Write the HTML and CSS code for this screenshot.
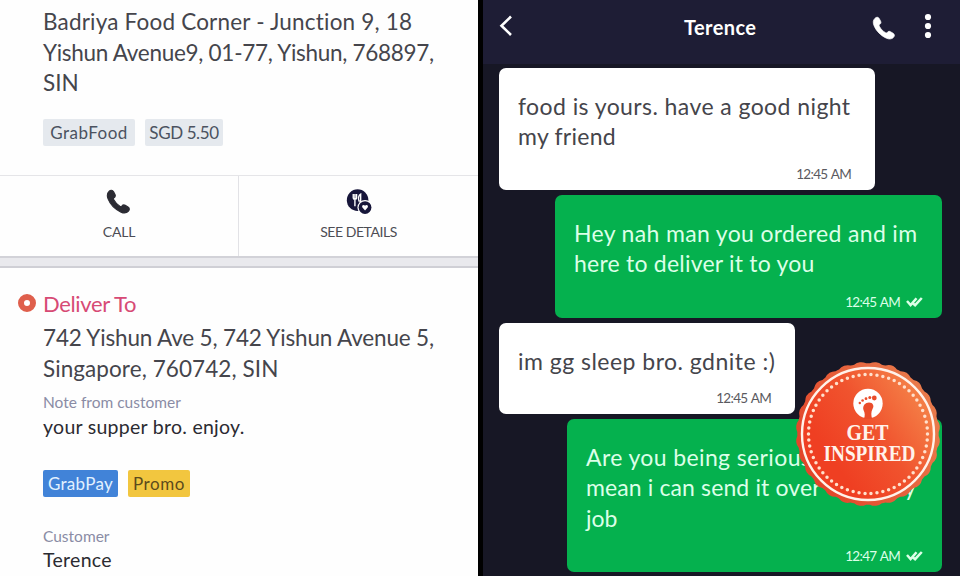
FILE: index.html
```html
<!DOCTYPE html>
<html lang="en">
<head>
<meta charset="utf-8">
<title>Delivery chat</title>
<link rel="stylesheet" href="styles.css">
</head>
<body>
<main class="screen">
  <section class="order">
    <div class="pickup">
      <p class="address"><span class="a1">Badriya Food Corner - Junction 9, 18</span><br><span class="a2">Yishun Avenue9, 01-77, Yishun, 768897,</span><br><span class="a3">SIN</span></p>
      <div class="tags"><span class="tag tag-food">GrabFood</span><span class="tag tag-price">SGD 5.50</span></div>
    </div>
    <div class="actions">
      <div class="action">
        <svg width="28" height="28" viewBox="0 0 28 28"><path d="M3.200 2.700C5 .8 7 1 8.200 3l1.500 3c.7 1.500.2 2.700-1.300 3.600-.6.5-.6 1-.2 1.800 1.700 3.300 3.800 5.500 7 7.300.8.5 1.300.4 1.800-.2 1.100-1.400 2.300-1.700 3.700-.9l3 1.800c1.800 1.200 1.900 3 .2 4.700-1.900 1.900-4.600 2.100-7.700.8C9.800 22 4.600 16.700 2.200 10.600.9 7.300 1.200 4.700 3.200 2.700Z" fill="#2b2b33" stroke="#2b2b33" stroke-width="1.200"/></svg>
        <span class="l1">CALL</span>
      </div>
      <div class="action">
        <svg width="28" height="28" viewBox="0 0 28 28"><circle cx="12.500" cy="12" r="11.600" fill="#17163a"/><path d="M7.800 5.500v4.200c0 2 3.600 2 3.600 0V5.500M9.600 5.500V18.500M15.800 18.500V5.500c-2.400 1.200-2.800 5-1.800 7.500h1.800" fill="none" stroke="#fff" stroke-width="1.500"/><circle cx="20.500" cy="20" r="8.200" fill="#fff"/><circle cx="20.500" cy="20" r="6.900" fill="#17163a"/><path d="M20.500 23.200l-3-3.600c-.8-2.600 2-3.200 3-1.500 1-1.700 3.800-1.100 3 1.500Z" fill="#fff"/></svg>
        <span class="l2">SEE DETAILS</span>
      </div>
    </div>
    <div class="gap"></div>
    <div class="dropoff">
      <h2><i class="pin"></i><span class="dt">Deliver To</span></h2>
      <p class="address"><span class="a4">742 Yishun Ave 5, 742 Yishun Avenue 5,</span><br><span class="a5">Singapore, 760742, SIN</span></p>
      <p class="label"><span class="n1">Note from customer</span></p>
      <p class="value"><span class="v1">your supper bro. enjoy.</span></p>
      <div class="tags tags-pay"><span class="tag tag-pay">GrabPay</span><span class="tag tag-promo">Promo</span></div>
      <p class="label"><span class="n2">Customer</span></p>
      <p class="value name"><span class="v2">Terence</span></p>
    </div>
  </section>
  <section class="chat">
    <header class="bar">
      <svg class="back" width="14" height="22" viewBox="0 0 14 22"><path d="M12 1.500L2.500 10.800 12 20" fill="none" stroke="#fff" stroke-width="2.600"/></svg>
      <h1>Terence</h1>
      <svg class="phone" width="25" height="25" viewBox="0 0 28 28"><path d="M3.200 2.700C5 .8 7 1 8.200 3l1.500 3c.7 1.500.2 2.700-1.300 3.600-.6.5-.6 1-.2 1.800 1.700 3.300 3.800 5.500 7 7.300.8.5 1.300.4 1.800-.2 1.100-1.400 2.300-1.700 3.700-.9l3 1.800c1.800 1.200 1.900 3 .2 4.700-1.900 1.900-4.600 2.100-7.700.8C9.800 22 4.600 16.700 2.200 10.600.9 7.300 1.200 4.700 3.200 2.700Z" fill="#fff" stroke="#fff" stroke-width=".8"/></svg>
      <svg class="more" width="8" height="26" viewBox="0 0 8 26"><g fill="#fff"><circle cx="4" cy="4" r="3.100"/><circle cx="4" cy="13" r="3.100"/><circle cx="4" cy="22" r="3.100"/></g></svg>
    </header>
    <div class="messages">
      <article class="msg in m1">
        <p><span class="c1">food is yours. have a good night</span><br><span class="c2">my friend</span></p>
        <time><span>12:45 AM</span></time>
      </article>
      <article class="msg out m2">
        <p><span class="c3">Hey nah man you ordered and im</span><br><span class="c4">here to deliver it to you</span></p>
        <time><span>12:45 AM</span><svg width="17" height="10" viewBox="0 0 17 10"><path d="M1 4l3.600 4L10.500 1.200M6.500 6l2.600 2.200L15.800 1" fill="none" stroke="#dcffe8" stroke-width="2.500"/></svg></time>
      </article>
      <article class="msg in m3">
        <p><span class="c5">im gg sleep bro. gdnite :)</span></p>
        <time><span>12:45 AM</span></time>
      </article>
      <article class="msg out m4">
        <p><span class="c6">Are you being serious? I</span><br><span class="c7">mean i can send it over<span class="c7b"> it's my</span></span><br><span class="c8">job</span></p>
        <time><span>12:47 AM</span><svg width="17" height="10" viewBox="0 0 17 10"><path d="M1 4l3.600 4L10.500 1.200M6.500 6l2.600 2.200L15.800 1" fill="none" stroke="#dcffe8" stroke-width="2.500"/></svg></time>
      </article>
    </div>
  </section>
  <svg class="badge" width="148" height="148" viewBox="-74 -74 148 148">
    <defs>
      <linearGradient id="face" x1=".2" y1=".65" x2=".85" y2=".2"><stop offset="0" stop-color="#ef3f22"/><stop offset=".5" stop-color="#f0532e"/><stop offset="1" stop-color="#f47c45"/></linearGradient>
      <linearGradient id="rim" x1=".1" y1=".7" x2=".9" y2=".3"><stop offset="0" stop-color="#e2452a"/><stop offset="1" stop-color="#e9794a"/></linearGradient>
      <clipPath id="scallop">
        <circle r="70.700"/>
        <rect x="-54.300" y="-54.300" width="108.600" height="108.600" rx="11"/>
        <rect x="-54.300" y="-54.300" width="108.600" height="108.600" rx="11" transform="rotate(12.857)"/>
        <rect x="-54.300" y="-54.300" width="108.600" height="108.600" rx="11" transform="rotate(25.714)"/>
        <rect x="-54.300" y="-54.300" width="108.600" height="108.600" rx="11" transform="rotate(38.571)"/>
        <rect x="-54.300" y="-54.300" width="108.600" height="108.600" rx="11" transform="rotate(51.429)"/>
        <rect x="-54.300" y="-54.300" width="108.600" height="108.600" rx="11" transform="rotate(64.286)"/>
        <rect x="-54.300" y="-54.300" width="108.600" height="108.600" rx="11" transform="rotate(77.143)"/>
      </clipPath>
    </defs>
    <circle r="74" fill="url(#rim)" clip-path="url(#scallop)"/>
    <circle r="66" fill="url(#face)" stroke="#fff2ea" stroke-width="2.400"/>
    <circle r="59.500" fill="none" stroke="#ffe0cc" stroke-width="3.500" stroke-linecap="round" stroke-dasharray="0 6.030" pathLength="373.860"/>
    <circle cy="-30.500" r="14.700" fill="#fff"/>
    <path d="M-4.200-15C-2.800-18-3-21-4.500-24C-5.800-28.500-2.500-31.500 1-31.500C5-31.500 6.600-28 4.500-25C3-22 3-19 4.200-15Z" fill="#ea4c2b"/>
    <g fill="#ea4c2b"><circle cx="6.300" cy="-36" r="2.400"/><circle cx="1.800" cy="-36.500" r="1.500"/><circle cx="-2" cy="-35.300" r="1.400"/><circle cx="-5.400" cy="-33.500" r="1.300"/><circle cx="-8.200" cy="-31" r="1.200"/></g>
    <text x="-21.500" y="5.500" textLength="42" lengthAdjust="spacingAndGlyphs">GET</text>
    <text x="-44.500" y="27.300" textLength="92" lengthAdjust="spacingAndGlyphs">INSPIRED</text>
  </svg>
</main>
</body>
</html>
```
FILE: styles.css
```css
* { box-sizing: border-box; }
body { margin: 0; font-family: Lato, "Noto Sans", sans-serif; font-variant-ligatures: none; }
h1, h2, p { margin: 0; font-weight: 400; }
svg { display: block; flex: none; }
.screen { position: relative; display: flex; width: 960px; height: 576px; overflow: hidden; background: #000; }
.order { width: 478px; background: #fefefe; color: #45454c; }
.pickup { height: 175px; padding: 7px 0 0 43px; }
.address { font-size: 22.5px; line-height: 30.5px; white-space: nowrap; }
.a1 { letter-spacing: .19px; }
.a2 { letter-spacing: -.29px; }
.a4 { letter-spacing: -.17px; }
.a5 { letter-spacing: .08px; }
.tags { display: flex; gap: 10px; margin-top: 20px; }
.tag { height: 27px; line-height: 28px; font-size: 17px; text-align: center; border-radius: 2px; white-space: nowrap; }
.tag-food { width: 92px; background: #e5e9ee; color: #4b5260; letter-spacing: .5px; }
.tag-price { width: 78px; background: #e5e9ee; color: #4b5260; letter-spacing: -.4px; }
.actions { display: flex; height: 81px; border-top: 1px solid #e5e5e8; }
.action { flex: 1; display: flex; flex-direction: column; align-items: center; padding-top: 13px; font-size: 14px; line-height: 18px; color: #4d4d54; }
.action:first-child { flex: none; width: 238px; }
.action + .action { border-left: 1px solid #e2e2e6; }
.action svg { width: 26px; height: 26px; margin-bottom: 8px; }
.l1 { letter-spacing: -.2px; }
.l2 { letter-spacing: -.45px; }
.gap { height: 12px; background: #e9e9ed; border-top: 2px solid #d2d2d8; border-bottom: 2px solid #cfcfd5; }
.dropoff { padding: 20px 0 0 43px; }
h2 { display: flex; align-items: center; margin-left: -25px; height: 31px; font-size: 22px; line-height: 31px; color: #d74a75; }
.dt { letter-spacing: -.35px; }
.pin { width: 18px; height: 18px; margin: -2px 7px 0 0; border: 6px solid #df5f4c; border-radius: 50%; background: #fff; }
.dropoff .address { margin-top: 4px; }
.label { margin-top: 8px; font-size: 15.5px; line-height: 20px; color: #8a8ca5; }
.value { font-size: 19.5px; line-height: 26px; margin-top: 2px; color: #2b2b31; }
.v1 { letter-spacing: .27px; }
.v2 { letter-spacing: .3px; }
.tags-pay { margin: 30px 0 19px; }
.tag-pay { width: 75px; background: #4183d8; color: #e2f1ff; letter-spacing: .3px; }
.tag-promo { width: 62px; background: #f2c63f; color: #5c4a1c; letter-spacing: .6px; }
.tags-pay + .label { margin-top: 29px; }
.name { margin-top: 1px; }
.chat { width: 477px; margin-left: 5px; background: #171725; }
.bar { display: flex; align-items: flex-start; height: 64px; padding-left: 16px; background: #1e1d35; color: #fff; }
.back { margin-top: 15px; }
h1 { width: 74px; margin: 14px 0 0 171px; font-size: 20px; font-weight: 700; line-height: 27px; letter-spacing: .4px; white-space: nowrap; }
.phone { margin: 16px 0 0 114px; }
.more { margin: 13px 0 0 27px; }
.messages { display: flex; flex-direction: column; gap: 5px; padding: 4px 18px 0 16px; }
.msg { display: flex; flex-direction: column; justify-content: space-between; border-radius: 7px; font-size: 23px; line-height: 30.5px; white-space: nowrap; padding: 22.5px 19px 7px; }
.in { background: #fff; color: #45454b; }
.out { align-self: flex-end; background: #05b14e; color: #dcffe8; }
.msg time { display: flex; align-items: center; align-self: flex-end; gap: 6px; font-size: 13.5px; line-height: 18px; letter-spacing: -.7px; word-spacing: 1px; }
.in time { margin-right: 5px; color: #5a5a60; }
.c1 { letter-spacing: .42px; }
.c2 { letter-spacing: .25px; }
.c3 { letter-spacing: .34px; }
.c4 { letter-spacing: .22px; }
.c5 { letter-spacing: .48px; }
.c6 { letter-spacing: .38px; }
.c7 { letter-spacing: .12px; }
.c7b { word-spacing: 12px; }
.m1 { width: 376px; height: 122px; }
.m2 { width: 387px; height: 123px; }
.m3 { width: 296px; height: 91px; }
.m4 { width: 375px; height: 153px; }
.badge { position: absolute; left: 793.5px; top: 360px; font-family: "Liberation Serif", serif; font-size: 23px; font-weight: 700; fill: #fff3ec; }
```
